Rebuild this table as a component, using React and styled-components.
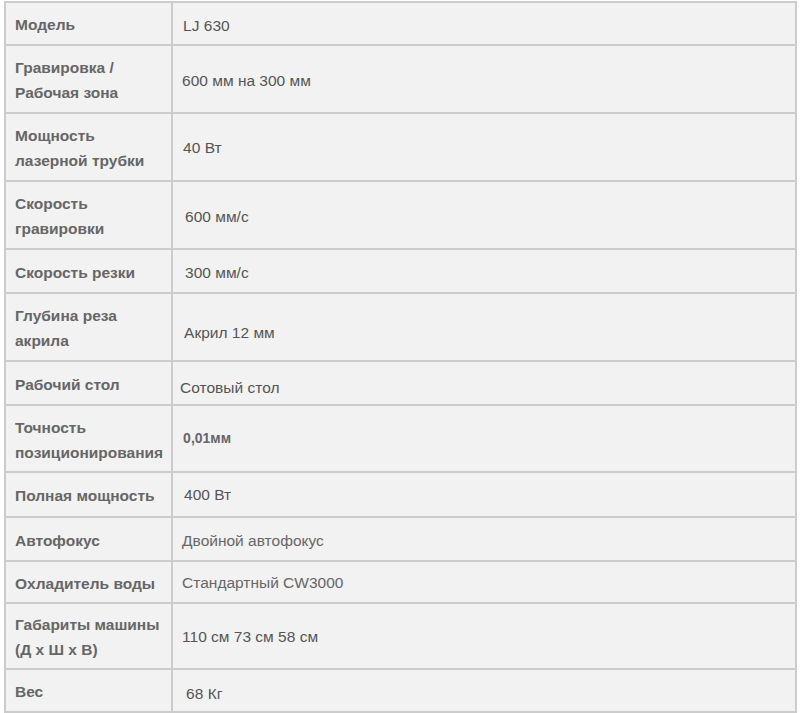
import React from 'react';
import styled, { createGlobalStyle } from 'styled-components';

const GlobalStyle = createGlobalStyle`
    html, body {
        margin: 0;
        padding: 0;
        background: #ffffff;
    }
`;

const Page = styled.div`
    padding: 1px 3px 0 4px;
    width: 800px;
    box-sizing: border-box;
`;

const SpecTable = styled.table`
    width: 100%;
    border-collapse: collapse;
    background: #f2f2f2;
    font-family: 'Liberation Sans', Arial, sans-serif;
    font-size: 15.5px;
    line-height: 25px;
`;

const Label = styled.th`
    width: 145px;
    text-align: left;
    vertical-align: middle;
    padding-top: ${p => 9 + (p.$extra || 0) / 2}px;
    padding-bottom: ${p => 7 + (p.$extra || 0) / 2}px;
    padding-left: 9px;
    padding-right: 8px;
    border: 2px solid #cccccc;
    font-weight: bold;
    color: #666666;
`;

const Value = styled.td`
    text-align: left;
    vertical-align: middle;
    padding-top: ${p => 9 + (p.$extra || 0) / 2 + (p.$drop || 0)}px;
    padding-bottom: ${p => 7 + (p.$extra || 0) / 2 - (p.$drop || 0)}px;
    padding-left: ${p => 9 + (p.$shift || 0)}px;
    padding-right: 10px;
    border: 2px solid #cccccc;
    color: ${p => (p.$muted ? '#666666' : '#555555')};
    font-weight: ${p => (p.$bold ? 'bold' : 'normal')};
    font-size: ${p => (p.$bold ? '14px' : '15.5px')};
`;

const specs = [
    { label: 'Модель', value: 'LJ 630', shift: 1, drop: 1 },
    { label: ['Гравировка /', 'Рабочая зона'], value: '600 мм на 300 мм', shift: 0 },
    { label: ['Мощность', 'лазерной трубки'], value: '40 Вт', shift: 1, drop: -1 },
    { label: ['Скорость', 'гравировки'], value: '600 мм/с', shift: 3 },
    { label: 'Скорость резки', value: '300 мм/с', shift: 3, extra: 1 },
    { label: ['Глубина реза', 'акрила'], value: 'Акрил 12 мм', shift: 2, drop: 4 },
    { label: 'Рабочий стол', value: 'Сотовый стол', shift: -2, drop: 3, extra: 1 },
    { label: ['Точность', 'позиционирования'], value: '0,01мм', shift: 1, drop: -1, bold: true, muted: true, extra: -1 },
    { label: 'Полная мощность', value: '400 Вт', shift: 2, drop: -1, extra: 2 },
    { label: 'Автофокус', value: 'Двойной автофокус', shift: 0, muted: true, extra: 1 },
    { label: 'Охладитель воды', value: 'Стандартный CW3000', shift: 0, drop: -1, muted: true, extra: -1 },
    { label: ['Габариты машины', '(Д х Ш х В)'], value: '110 см 73 см 58 см', shift: 0, drop: -1, extra: -2 },
    { label: 'Вес', value: '68 Кг', shift: 4, drop: 2 },
];

const App = () => (
    <Page>
        <GlobalStyle />
        <SpecTable>
            <tbody>
                {specs.map((row, i) => (
                    <tr key={i}>
                        <Label $extra={row.extra}>
                            {Array.isArray(row.label)
                                ? row.label.map((line, j) => (
                                    <React.Fragment key={j}>
                                        {j > 0 && <br />}
                                        {line}
                                    </React.Fragment>
                                ))
                                : row.label}
                        </Label>
                        <Value
                            $extra={row.extra}
                            $shift={row.shift}
                            $drop={row.drop}
                            $bold={row.bold}
                            $muted={row.muted}
                        >
                            {row.value}
                        </Value>
                    </tr>
                ))}
            </tbody>
        </SpecTable>
    </Page>
);

export default App;
